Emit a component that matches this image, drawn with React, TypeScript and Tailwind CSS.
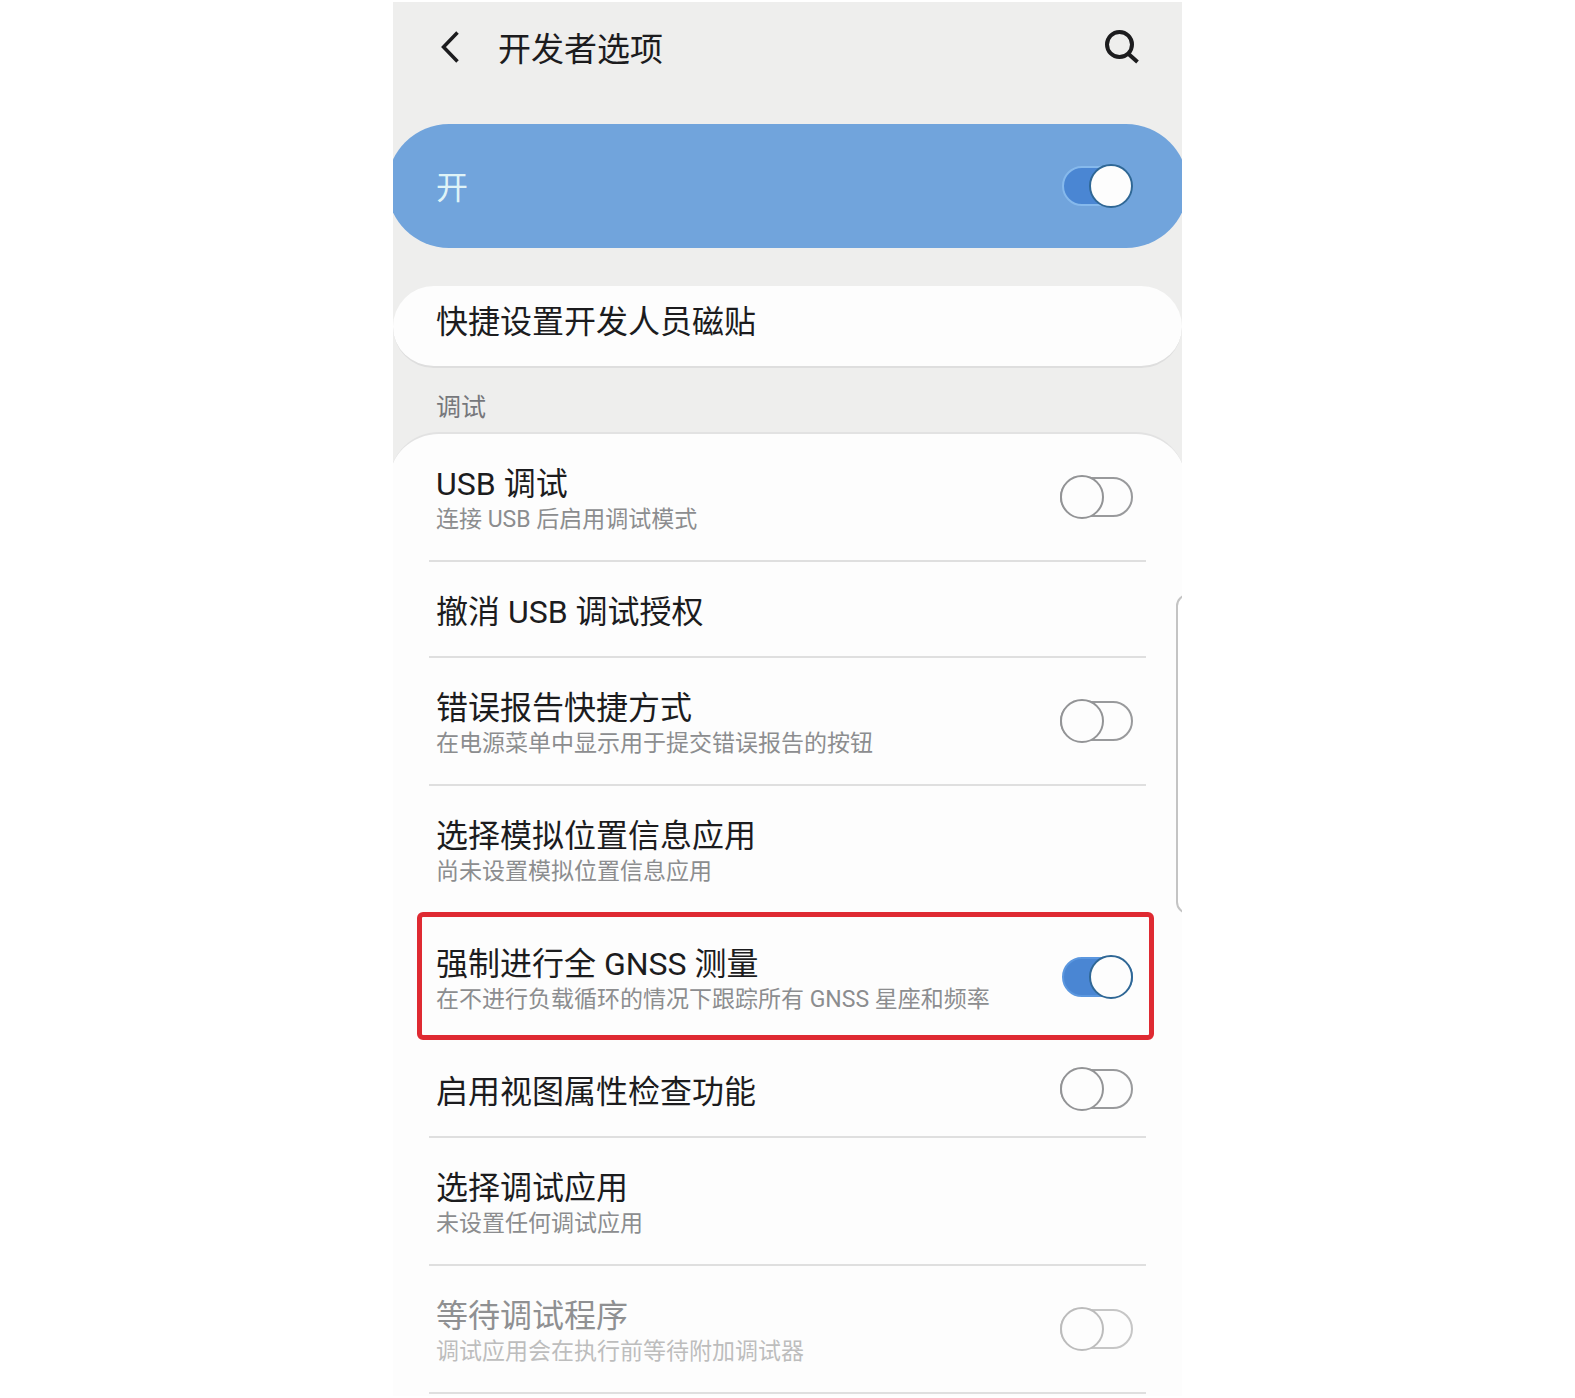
import { useState } from "react";
import clsx from "clsx";

interface Option {
  id: string;
  title: string;
  summary?: string;
  toggle?: boolean;
  disabled?: boolean;
  highlighted?: boolean;
}

const OPTIONS: Option[] = [
  { id: "usb-debug", title: "USB 调试", summary: "连接 USB 后启用调试模式", toggle: true },
  { id: "usb-revoke", title: "撤消 USB 调试授权" },
  {
    id: "bug-report",
    title: "错误报告快捷方式",
    summary: "在电源菜单中显示用于提交错误报告的按钮",
    toggle: true,
  },
  { id: "mock-location", title: "选择模拟位置信息应用", summary: "尚未设置模拟位置信息应用" },
  {
    id: "gnss",
    title: "强制进行全 GNSS 测量",
    summary: "在不进行负载循环的情况下跟踪所有 GNSS 星座和频率",
    toggle: true,
    highlighted: true,
  },
  { id: "view-inspect", title: "启用视图属性检查功能", toggle: true },
  { id: "debug-app", title: "选择调试应用", summary: "未设置任何调试应用" },
  {
    id: "wait-debugger",
    title: "等待调试程序",
    summary: "调试应用会在执行前等待附加调试器",
    toggle: true,
    disabled: true,
  },
];

interface SwitchProps {
  id: string;
  checked: boolean;
  onChange: () => void;
  disabled?: boolean;
  onBlue?: boolean;
}

const Switch = ({ id, checked, onChange, disabled, onBlue }: SwitchProps) => (
  <input
    id={id}
    type="checkbox"
    role="switch"
    checked={checked}
    disabled={disabled}
    onChange={onChange}
    className={clsx(
      "relative h-10 shrink-0 appearance-none rounded-full border-2",
      "before:absolute before:-top-1 before:size-11 before:rounded-full before:border-2 before:bg-[#fdfdfd]",
      checked
        ? "w-[71px] bg-[#4a86d3] before:-right-0.5 before:border-[#2f6795]"
        : "w-[73px] bg-[#fdfdfd] before:-left-0.5",
      checked && (onBlue ? "border-[#86b9ec]" : "border-[#5b97df]"),
      !checked &&
        (disabled
          ? "border-[#c6c6c6] before:border-[#bcbcbc]"
          : "border-[#999a9c] before:border-[#939496]")
    )}
  />
);

const OptionText = ({ option }: { option: Option }) => (
  <span className="block min-w-0 flex-1 self-start pt-8 pb-[22px]">
    <span
      className={clsx(
        "block text-[32px] leading-9",
        option.disabled ? "text-[#8f9092]" : "text-[#1c1c1e]"
      )}
    >
      {option.title}
    </span>
    {option.summary && (
      <span
        className={clsx(
          "block text-[23px] leading-9",
          option.disabled ? "text-[#bdbdbd]" : "text-[#8c8d8f]"
        )}
      >
        {option.summary}
      </span>
    )}
  </span>
);

const OptionRow = ({
  option,
  checked,
  onToggle,
}: {
  option: Option;
  checked: boolean;
  onToggle: () => void;
}) => {
  const rowClass = clsx(
    "relative flex min-h-24 w-full items-center border-b-2 pr-[13px] pl-[7px] text-left",
    option.highlighted ? "border-transparent" : "border-[#dfdfdf]"
  );

  if (!option.toggle) {
    return (
      <button type="button" className={rowClass}>
        <OptionText option={option} />
      </button>
    );
  }

  return (
    <label htmlFor={option.id} className={rowClass}>
      <OptionText option={option} />
      <Switch id={option.id} checked={checked} onChange={onToggle} disabled={option.disabled} />
      {option.highlighted && (
        <span className="pointer-events-none absolute -top-0.5 -right-2 bottom-0 -left-3 rounded-md border-[5px] border-[#df2a32]" />
      )}
    </label>
  );
};

const App = () => {
  const [enabled, setEnabled] = useState(true);
  const [values, setValues] = useState<{ [id: string]: boolean }>({ gnss: true });

  const handleToggle = (id: string) => () =>
    setValues((prev) => ({ ...prev, [id]: !prev[id] }));

  return (
    <div className="bg-white pt-0.5 font-[Roboto,'Noto_Sans_CJK_SC',sans-serif]">
      <main className="relative mx-auto max-w-[789px] overflow-hidden bg-[#eeeeed]">
        <header className="flex items-start pt-7 pr-[41px] pb-14 pl-[47px] text-[#1c1c1e]">
          <button type="button" aria-label="返回" className="shrink-0">
            <svg width="22" height="36" viewBox="0 0 22 36" fill="none">
              <path d="M17.5 2.5 3.5 17l14 14.5" stroke="currentColor" strokeWidth="3.500" />
            </svg>
          </button>
          <h1 className="ml-9 flex-1 pt-0.5 text-[33px] leading-9">开发者选项</h1>
          <button type="button" aria-label="搜索" className="shrink-0">
            <svg width="38" height="36" viewBox="0 0 38 36" fill="none" stroke="currentColor">
              <circle cx="16.5" cy="14.5" r="12.5" strokeWidth="4" />
              <path d="m25 23.5 9.500 8.500" strokeWidth="4" />
            </svg>
          </button>
        </header>

        <label
          htmlFor="developer-options"
          className="-mx-1.5 flex min-h-[124px] items-center rounded-full bg-[#71a4dc] pr-[55px] pl-[49px]"
        >
          <span className="flex-1 pt-1 text-[32px] leading-9 text-[#dff3f7]">开</span>
          <Switch
            id="developer-options"
            checked={enabled}
            onChange={() => setEnabled((prev) => !prev)}
            onBlue
          />
        </label>

        <button
          type="button"
          className="mt-[38px] block w-full rounded-[42px] border-b-2 border-[#dedede] bg-[#fdfdfd] px-[43px] pt-[18px] pb-[26px] text-left text-[32px] leading-9 text-[#1c1c1e]"
        >
          快捷设置开发人员磁贴
        </button>

        <h2 className="px-[43px] pt-6 pb-2 text-[25px] leading-8 text-[#76777b]">调试</h2>

        <ul className="-mx-1 rounded-t-[50px] border-t-2 border-[#e2e2e2] bg-[#fdfdfd] px-10 pb-0.5">
          {OPTIONS.map((option) => (
            <li key={option.id}>
              <OptionRow
                option={option}
                checked={!!values[option.id]}
                onToggle={handleToggle(option.id)}
              />
            </li>
          ))}
        </ul>

        {/* edge panel handle */}
        <div className="absolute top-[592px] -right-3 h-[320px] w-[18px] rounded-l-xl border-2 border-[#c4c4c4] bg-white" />
      </main>
    </div>
  );
};

export default App;
